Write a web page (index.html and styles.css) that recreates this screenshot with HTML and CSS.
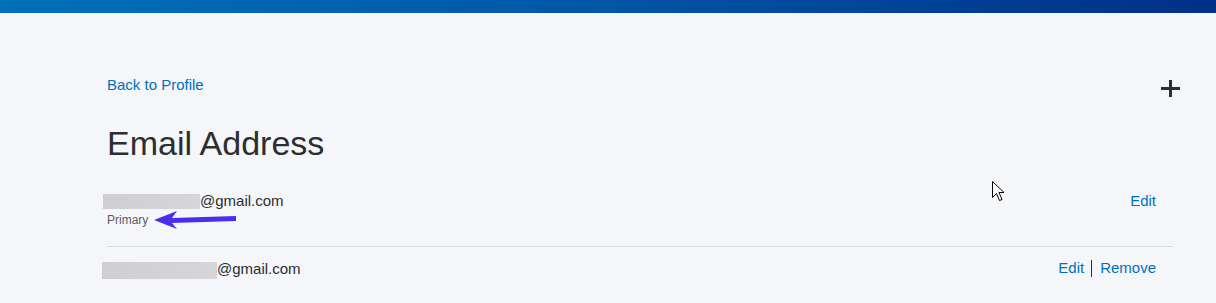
FILE: index.html
```html
<!DOCTYPE html>
<html lang="en">
<head>
<meta charset="utf-8">
<title>Email Address</title>
<link rel="stylesheet" href="styles.css">
</head>
<body>
<div class="topbar"></div>
<main class="main">
  <div class="head">
    <a class="back" href="#">Back to Profile</a>
    <button class="add" aria-label="Add email">
      <span class="plus-h"></span><span class="plus-v"></span>
    </button>
  </div>
  <h1 class="title">Email Address</h1>
  <ul class="emails">
    <li class="email-row">
      <div class="email-info">
        <div class="email"><span class="redact redact-1"></span>@gmail.com</div>
        <div class="primary">Primary</div>
      </div>
      <div class="actions"><a href="#" class="action">Edit</a></div>
    </li>
    <li class="email-row second">
      <div class="email-info">
        <div class="email"><span class="redact redact-2"></span>@gmail.com</div>
      </div>
      <div class="actions">
        <a href="#" class="action">Edit</a>
        <span class="sep"></span>
        <a href="#" class="action">Remove</a>
      </div>
    </li>
  </ul>
</main>
<svg class="arrow" width="90" height="24" viewBox="0 0 90 24" aria-hidden="true">
  <path d="M4 12 L27 3 L22 10 L86 8 L86 13 L22 15 L27 21 Z" fill="#4a2ef0"/>
</svg>
<svg class="cursor" width="14" height="22" viewBox="0 0 14 22" aria-hidden="true">
  <path d="M0.5 0.5 L0.5 16.5 L4.5 12.5 L7.5 19.5 L10 18.5 L7 11.5 L12 11.5 Z" fill="#fff" stroke="#000" stroke-width="1"/>
</svg>
</body>
</html>
```
FILE: styles.css
```css
html, body {
  margin: 0;
  padding: 0;
}
body {
  background: #f5f6fa;
  font-family: "Liberation Sans", Arial, sans-serif;
  color: #2c2e2f;
  position: relative;
  height: 303px;
  overflow: hidden;
}
.topbar {
  height: 13px;
  background: linear-gradient(90deg, #0070ba 0%, #0059a8 45%, #003087 100%);
}
.main {
  padding: 63px 36px 0 107px;
}
.head {
  display: flex;
  justify-content: space-between;
  align-items: flex-start;
  height: 17px;
}
.back {
  font-size: 15px;
  line-height: 17px;
  color: #0070ba;
  text-decoration: none;
}
.add {
  position: relative;
  width: 19px;
  height: 17px;
  margin-top: 4px;
  padding: 0;
  border: 0;
  background: none;
}
.plus-h {
  position: absolute;
  left: 0;
  top: 7px;
  width: 19px;
  height: 3px;
  background: #2c2e2f;
}
.plus-v {
  position: absolute;
  left: 8px;
  top: 0;
  width: 3px;
  height: 17px;
  background: #2c2e2f;
}
.title {
  margin: 30px 0 0;
  font-size: 34px;
  line-height: 40px;
  font-weight: 400;
  color: #2c2e2f;
}
.emails {
  list-style: none;
  margin: 28px 7px 0 0;
  padding: 0;
}
.email-row {
  display: flex;
  justify-content: space-between;
  align-items: flex-start;
  padding: 0 17px 18px 0;
  border-bottom: 1px solid #dcdde0;
}
.email-row.second {
  padding-top: 11px;
  border-bottom: 0;
}
.email {
  font-size: 15px;
  line-height: 20px;
  color: #2c2e2f;
  display: flex;
  align-items: center;
}
.redact {
  display: inline-block;
  height: 15px;
  background: linear-gradient(90deg, #cfcfd1, #d6d6d8);
}
.redact-1 {
  width: 97px;
  margin-left: -4px;
}
.redact-2 {
  width: 115px;
  height: 17px;
  margin-left: -5px;
  margin-top: 4px;
}
.primary {
  margin-top: 1px;
  font-size: 12px;
  line-height: 16px;
  color: #5a5c5e;
}
.actions {
  display: flex;
  align-items: center;
  font-size: 15px;
  line-height: 20px;
}
.action {
  color: #0070ba;
  text-decoration: none;
}
.sep {
  width: 1px;
  height: 17px;
  background: #2c2e2f;
  margin: 0 8px 0 7px;
}
.arrow {
  position: absolute;
  left: 150px;
  top: 208px;
}
.cursor {
  position: absolute;
  left: 992px;
  top: 181px;
}
```
